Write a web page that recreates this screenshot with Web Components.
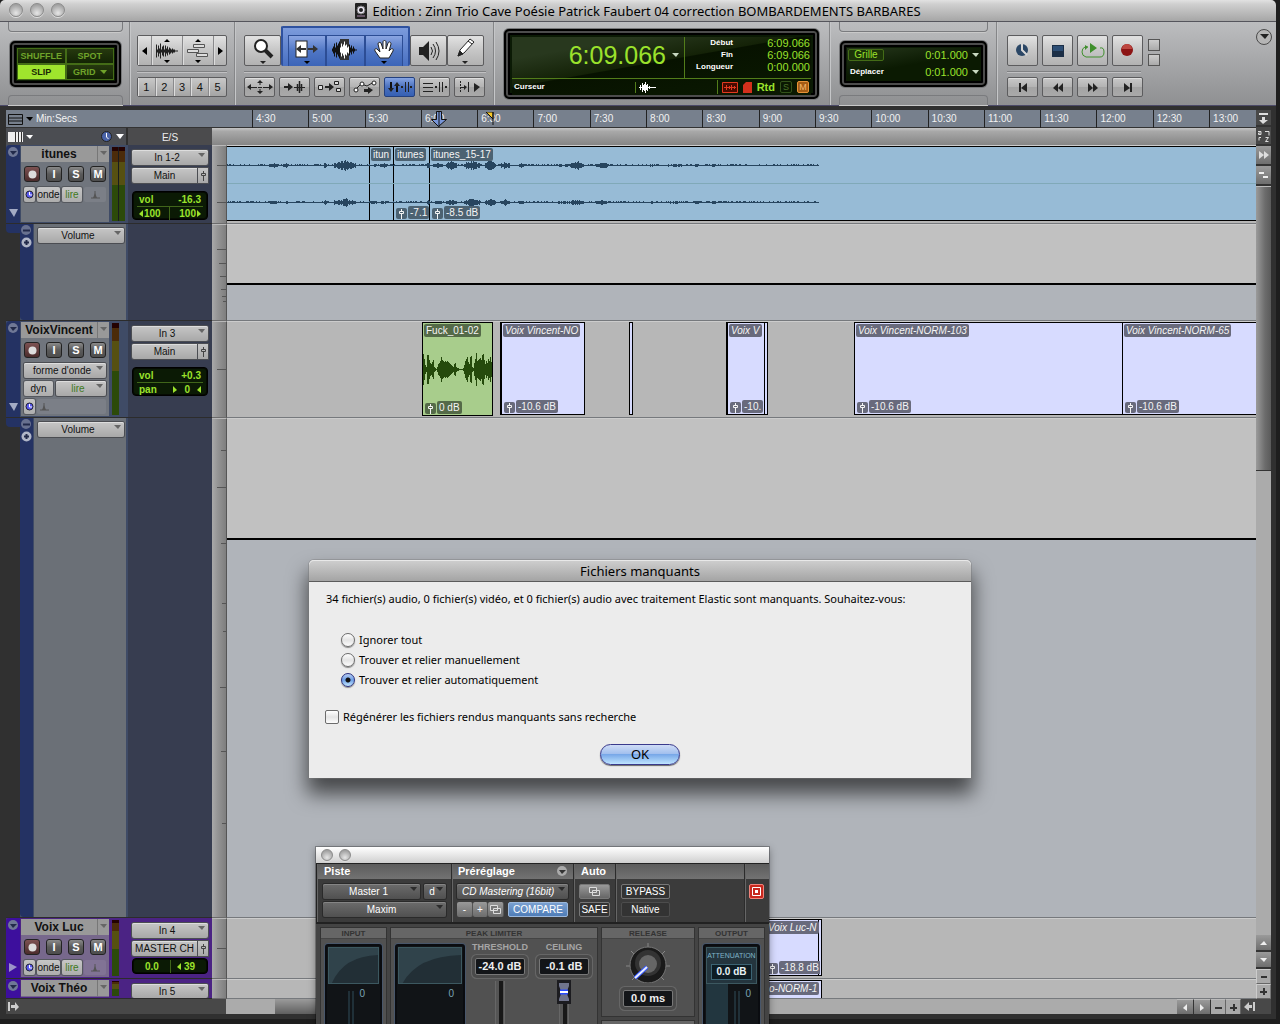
<!DOCTYPE html>
<html lang="fr">
<head>
<meta charset="utf-8">
<title>Edition : Zinn Trio Cave Poésie</title>
<style>
html,body{margin:0;height:100%;overflow:hidden;background:#1e1e1e}
body{font:10px/12px "Liberation Sans",Arial,sans-serif;color:#111}
</style>
</head>
<body>
<pt-app></pt-app>
<script>
const BASE=`*{box-sizing:border-box}:host{display:block}button,select,input{font:inherit;color:inherit;margin:0;padding:0;border:0;background:none}button{display:flex;align-items:center;justify-content:center;white-space:nowrap}svg{display:block;flex:none}`;
function def(tag,css,html){
  customElements.define(tag,class extends HTMLElement{
    connectedCallback(){
      if(this.shadowRoot)return;
      const r=this.attachShadow({mode:'open'});
      r.innerHTML='<style>'+BASE+css+'</style>'+(typeof html==='function'?html(this):html);
    }
  });
}
const svg=(w,h,body)=>`<svg width="${w}" height="${h}" viewBox="0 0 ${w} ${h}" aria-hidden="true">${body}</svg>`;
const wavePts=(a,cx,cy)=>{let s='';a.forEach((v,i)=>{s+=`M${cx+i} ${cy-v}V${cy+v+1}`});return s};
const I={
 left:svg(6,10,'<path d="M5 1V9L0 5Z"/>'),
 right:svg(6,10,'<path d="M1 1V9L6 5Z"/>'),
 wave:svg(24,26,`<path d="M9 4L12 1L15 4ZM9 22L12 25L15 22Z"/><path stroke="#222" d="${wavePts([6,1,5,2,7,1,4,5,1,5,2,4,1,3,2,1,2,1,1,0,0,0],1.5,12.5)}"/>`),
 tracks:svg(22,26,'<path d="M8 4L11 1L14 4ZM8 22L11 25L14 22Z"/><path fill="#ddd" stroke="#555" d="M6.500 6.500h11v3h-11zM.500 11.500h11v3h-11zM9.500 15.500h11v3h-11z"/>'),
 zoom:svg(24,28,'<circle cx="10" cy="9" r="6" fill="#fff" stroke="#222" stroke-width="2"/><path d="M14 13L21 20" stroke="#222" stroke-width="4"/><path d="M9 24h6l-3 3z"/>'),
 trim:svg(26,28,'<rect x="2" y="4" width="11" height="16" fill="#fff" stroke="#222"/><path d="M2 12l5-4v3h5v2h-5v3zM24 12l-5-4v3h-5v2h5v3z" fill="#333"/><path d="M10 24h6l-3 3z"/>'),
 sel:svg(26,28,`<path stroke="#111" d="${wavePts([1,3,6,2,7,4,6,8,9,5,6,8,9,4,7,6,3,5,2,4,1,3,1,0,0],.5,12.5)}"/><rect x="8" y="2" width="9" height="21" fill="#333"/><path stroke="#fff" d="${wavePts([2,6,3,5,8,4,5,2,3],8.5,12.5)}"/>`),
 hand:svg(22,28,'<path d="M7 21l-5-7c-1-2 1-3 2-2l3 3-2-8c0-2 2-2 3-1l2 6V5c0-2 3-2 3 0v7l2-6c1-2 3-1 3 1l-2 7 2-2c1-1 3 0 2 2l-4 7z" fill="#fff" stroke="#222"/><path d="M8 24h6l-3 3z"/>'),
 spk:svg(22,24,'<path d="M1 8h4l6-6v20l-6-6h-4z" fill="#222"/><path d="M13 8q3 4 0 8M15 5q5 7 0 14M18 3q6 9 0 18" fill="none" stroke="#222"/>'),
 pen:svg(22,28,'<path d="M3 19l2-6L15 2l4 3L9 16z" fill="#fff" stroke="#222"/><path d="M3 19l2-5 3 3zM13 4l4 3" stroke="#222"/><path d="M7 24h6l-3 3z"/>'),
 s1:svg(26,16,'<path d="M0 8l4-3v6zM26 8l-4-3v6zM13 1l3 3h-6zM13 15l3-3h-6z"/><path d="M3 8.500h7M16 8.500h7M11 8.500h4M13 3v3M13 10v3" stroke="#222"/>'),
 s2:svg(22,14,'<path d="M0 6h4V3l5 4-5 4V8H0z"/><path d="M10 7.500h11" stroke="#222"/><path d="M15.500 1v12M13.500 4v7M17.500 4v7" stroke="#222" stroke-width="1.500"/>'),
 s3:svg(24,14,'<path d="M7 6h4V3l5 4-5 4V8H7z"/><path d="M.500 5.500h4v4h-4zM16.500 1.500h4v3h-4zM18.500 8.500h4v3h-4z" fill="#ddd" stroke="#222"/>'),
 s4:svg(24,14,'<path d="M2 10L8 4l6 2 7-4" fill="none" stroke="#222"/><circle cx="3" cy="10" r="2" fill="#fff" stroke="#222"/><circle cx="9" cy="4" r="2" fill="#fff" stroke="#222"/><circle cx="21" cy="3" r="2" fill="#fff" stroke="#222"/><path d="M11 9h4V7l5 3-5 4v-2h-4z"/>'),
 s5:svg(24,12,'<path d="M3 1v7M9 4v7" stroke="#111" fill="none" stroke-width="2"/><path d="M0 7h6l-3 4zM6 5h6L9 1zM13 5h2v2h-2zM17 1h1v10h-1zM20 1h1v10h-1zM22 5h2v2h-2z"/>'),
 s6:svg(24,12,'<path d="M0 2.500h10M0 6.500h10M0 10.500h10" stroke="#222"/><path d="M12 5h2v2h-2zM16 1h1v10h-1zM19 1h1v10h-1zM22 5h2v2h-2z"/>'),
 s7:svg(22,12,'<path d="M1.500 0v12" stroke="#222" stroke-dasharray="2 1"/><path d="M9 1h1v10H9zM2 6h3V4l3 2-3 3V7H2zM15 2v9l6-5z"/>'),
 online:svg(13,13,'<circle cx="6" cy="6" r="6" fill="#2b4766"/><path d="M6 0v6l5 5" stroke="#d8d8d8" stroke-width="2" fill="none"/>'),
 stop:svg(12,12,'<rect width="12" height="12" fill="#1c2f47"/><rect x="1" y="1" width="10" height="5" fill="#2d4e75"/>'),
 play:svg(24,16,'<path d="M7 4H4q-3 1-3 5t4 5h14q4 0 4-5t-4-4" fill="none" stroke="#3f8f2c"/><path d="M9 0v10l7-5zM4 2v5l3-3z" fill="#3f8f2c"/>'),
 rec:svg(13,13,'<circle cx="6" cy="6" r="6" fill="#8c1414"/><path d="M1 5a5 5 0 0 1 10 0z" fill="#bd4640"/>'),
 t1:svg(8,9,'<path d="M0 0h2v9H0zM8 0v9L2 5z"/>'),
 t2:svg(10,9,'<path d="M5 0v9L0 5zM10 0v9L5 5z"/>'),
 t3:svg(10,9,'<path d="M0 0v9l5-4zM5 0v9l5-4z"/>'),
 t4:svg(8,9,'<path d="M6 0h2v9H6zM0 0v9l6-4z"/>'),
 down:svg(7,4,'<path fill="currentColor" d="M0 0h7L4 4z"/>'),
 clock:svg(9,9,'<circle cx="4.500" cy="4.500" r="3.500" fill="#5a5af0" stroke="#223"/><path d="M4.500 2v3H7" stroke="#fff" fill="none"/>'),
 metro:svg(9,9,'<path d="M0 8h9M4 1v6" stroke="#555"/><path d="M2 8l2-5 2 5z" fill="#555"/>'),
 fader:svg(7,11,'<path d="M3.500 1v2M3.500 6v5" stroke="currentColor"/><path d="M1.500 3.500h4v2h-4z" fill="none" stroke="currentColor"/>'),
 copy:svg(11,9,'<path d="M.500.500h7v5h-7zM3.500 3.500h7v5h-7z" fill="#777" stroke="#ddd"/>'),
 smallwave:svg(17,11,'<path d="M0 5.500h17M1.500 3v5M3.500 1v9M5.500 2v7M4.500 3v5M6.500 0v11M7.500 3v5M8.500 2v7M10.500 4v3" stroke="#fff"/>')
};

def('round-light',`:host{width:14px;height:14px;border-radius:50%;background:radial-gradient(circle at 50% 75%,#e6e6e6,#a2a2a2 75%);border:1px solid #8b8b8b;box-shadow:0 1px 0 #ddd}`,'');

def('pt-titlebar',`:host{display:flex;height:22px;align-items:center;justify-content:center;position:relative;background:linear-gradient(#e2e2e2,#cfcfcf 20%,#a6a6a6);border-bottom:1px solid #55555c;border-radius:5px 5px 0 0;font:13px/16px "Noto Sans","Open Sans",sans-serif;color:#000;gap:5px}
 .l{position:absolute;left:9px;top:3px;display:flex;gap:7px}`,
 `<div class="l"><round-light></round-light><round-light></round-light><round-light></round-light></div>${svg(12,16,'<rect width="12" height="16" rx="1" fill="#222"/><circle cx="6" cy="7" r="4" fill="#e8e4f0" stroke="#777"/><circle cx="6" cy="7" r="2" fill="#222"/><path d="M2 13h8" stroke="#a8a"/>')}<slot></slot>`);

def('tool-button',`:host{display:block;flex:0 0 auto;width:31px;height:20px}
 button{width:100%;height:100%;border:1px solid #5c5c5e;border-radius:2px;background:linear-gradient(#c8c8c8,#b4b4b4 48%,#a4a4a4 52%,#a9a9a9);box-shadow:inset 0 1px 0 #dedede;color:#222;fill:#222}
 :host([big]) button{background:linear-gradient(#e2e2e2,#c6c6c6 50%,#b2b2b2)}
 :host([on]) button{background:linear-gradient(#86a5e4,#4a70bd 50%,#3560b4);border-color:#24407e;box-shadow:none}`,
 e=>`<button aria-label="${e.getAttribute('label')||e.textContent}">${I[e.getAttribute('icon')]||'<slot></slot>'}</button>`);

def('lcd-box',`:host{display:block;border:2px solid #000;border-radius:5px;background:#0b1a05;box-shadow:0 0 0 1px #77787a,inset 0 0 0 2px #4c4c4c,inset 0 0 0 4px #000;padding:6px;color:#9be22c}
 :host([mini]){border-width:1px;border-radius:4px;box-shadow:inset 0 0 0 1px #050a02;padding:1px 4px}`,'<slot></slot>');

def('pt-toolbar',`:host{display:flex;height:84px;background:linear-gradient(#bcbdbf,#a5a6a8 50%,#8f9092);border-bottom:1px solid #4c4a68;position:relative}
 section{border-right:1px solid #858688;box-shadow:1px 0 0 #c5c6c8;display:flex;flex-direction:column;flex:none}
 .frame{justify-content:space-between;padding:0 6px 0 8px}
 .cap{height:10px;border:1px solid #7a7b7e;border-top:0;border-radius:0 0 4px 4px;box-shadow:0 1px 0 #c9c9c9}
 .cap.b{border:1px solid #7a7b7e;border-bottom:0;border-radius:4px 4px 0 0}
 .row{display:flex}
 .pad{padding:13px 7px 0 7px}
 .hr{height:2px;background:#7f8082;border-bottom:1px solid #c0c0c2;margin:5px 0 4px}
 .seg{border:1px solid #5c5c5e;border-radius:2px;background:linear-gradient(#e2e2e2,#c6c6c6 50%,#b2b2b2)}
 .seg button{flex:1 1 0;border-left:1px solid #8a8a8c;box-shadow:inset 1px 0 0 #ddd}
 .seg button:first-child{border-left:0}
 .modes{display:grid;grid-template-columns:1fr 1fr;grid-template-rows:16px 16px;font:bold 9px/12px "Liberation Sans",Arial,sans-serif;color:#6fa32a;gap:0;height:32px}
 .modes button{border:1px solid #446c17;background:linear-gradient(#26390f,#132404);gap:4px}
 .modes button.on{background:#9fe52d;color:#1a2a05}
 .blue{display:flex;background:linear-gradient(#7c9bdc,#4870c2);border:2px solid #2e519f;border-bottom:0;border-radius:2px;padding:7px 5px 0;margin-top:-9px;width:129px;height:40px}
 .blue button{flex:1;border:1px solid #2c4d95;border-bottom:0;background:linear-gradient(#8aa5e2,#4f76c5 50%,#3c65b8)}
 .nums{height:20px;background:linear-gradient(#c8c8c8,#a4a4a4);font-size:11px}
 .main{display:grid;grid-template-columns:173px 1fr;grid-template-rows:42px 16px;height:58px;width:100%;background:linear-gradient(170deg,#28381e 0 20%,#142207 45%,#071200 46%,#0b1a02)}
 .big{display:flex;align-items:center;justify-content:flex-end;gap:6px;font-size:25px;line-height:28px;padding:0 5px 6px 0;border-right:1px solid #527d1a;border-bottom:1px solid #527d1a}
 .rng{display:grid;grid-template-columns:48px 1fr;align-content:start;text-align:right;font-size:11px;line-height:12px;padding-right:1px;border-bottom:1px solid #527d1a}
 .lab{font:bold 8px/12px "Liberation Sans",Arial,sans-serif;color:#fff}
 .bot{grid-column:1/3;display:flex;align-items:center;padding:0 2px}
 .g{display:grid;grid-template-columns:36px 1fr 7px;align-items:center;gap:0 4px;grid-template-rows:15px 18px;text-align:right;font-size:11px;height:33px;padding:0 1px;background:linear-gradient(170deg,#26371c,#0b1a02 50%)}
 .g .gr{border:1px solid #446c17;background:#1c3409;border-radius:2px;font-size:10px;line-height:10px;color:#9be22c;text-align:center}
 .sq{width:12px;height:12px;border:1px solid #555;background:linear-gradient(#ccc,#aaa)}
 .tri{color:#c8d8c0}
 .menu{position:absolute;right:4px;top:7px;width:16px;height:16px;border:1px solid #4a4a4a;border-radius:50%;background:#b5b5b5;color:#333}
 .s,.m{width:12px;height:12px;border:1px solid #33521a;border-radius:2px;font:9px/10px "Liberation Sans",Arial,sans-serif;text-align:center;color:#4a7228}
 .m{border-color:#e69238;background:#a35c14;color:#f3b86a}`,
 `<section class="frame" style="width:130px"><div class="cap"></div>
  <lcd-box style="margin:0 2px;padding:5px;height:46px"><div class="modes"><button>SHUFFLE</button><button>SPOT</button><button class="on">SLIP</button><button>GRID ${I.down}</button></div></lcd-box><div class="cap b"></div></section>
 <section class="pad" style="width:105px"><div class="row seg" style="width:90px;height:31px"><button style="flex:0 0 13px" aria-label="Zoom arrière">${I.left}</button><button aria-label="Zoom audio">${I.wave}</button><button aria-label="Zoom MIDI">${I.tracks}</button><button style="flex:0 0 13px" aria-label="Zoom avant">${I.right}</button></div><div class="hr" style="width:90px"></div>
  <div class="row seg nums" style="width:90px"><button>1</button><button>2</button><button>3</button><button>4</button><button>5</button></div></section>
 <section class="pad" style="width:259px;padding-left:9px"><div class="row" style="height:31px"><tool-button big icon="zoom" label="Loupe" style="width:37px;height:31px"></tool-button><div class="blue"><button aria-label="Trim">${I.trim}</button><button aria-label="Sélecteur">${I.sel}</button><button aria-label="Main">${I.hand}</button></div><tool-button big icon="spk" label="Scrubber" style="width:37px;height:31px"></tool-button><tool-button big icon="pen" label="Crayon" style="width:37px;height:31px"></tool-button></div><div class="hr"></div>
  <div class="row" style="gap:4px"><tool-button icon="s1" label="Zoom toggle"></tool-button><tool-button icon="s2" label="Tab to transient"></tool-button><tool-button icon="s3" label="Mirrored"></tool-button><tool-button icon="s4" label="Automation"></tool-button><tool-button on icon="s5" label="Link"></tool-button><tool-button icon="s6" label="Link track"></tool-button><tool-button icon="s7" label="Insertion"></tool-button></div></section>
 <section style="width:336px;padding:7px 10px 0 10px"><lcd-box style="height:70px"><div class="main"><div class="big">6:09.066<span class="tri">${I.down}</span></div><div class="rng"><span class="lab">Début</span><span>6:09.066</span><span class="lab">Fin</span><span>6:09.066</span><span class="lab">Longueur</span><span>0:00.000</span></div>
  <div class="bot"><span class="lab" style="flex:0 0 121px">Curseur</span><span style="border-left:1px solid #527d1a;padding-left:3px;flex:1">${I.smallwave}</span><span style="border-left:1px solid #527d1a;height:14px;display:flex;align-items:center;gap:5px;padding-left:4px">${svg(16,11,'<path d="M.500.500h15v10H.500z" fill="#4a0a00" stroke="#e33a20"/><path d="M2 5.500h12M4.500 3v5M7.500 4v3M9.500 3v5M12.500 4v3" stroke="#e33a20"/>')}${svg(9,11,'<path d="M3 0h6v11H0V3z" fill="#d2301c"/>')}<b style="font-size:11px">Rtd</b><span class="s">S</span><span class="m">M</span></span></div></div></lcd-box></section>
 <section class="frame" style="width:167px;padding:0 8px 0 9px"><div class="cap"></div><lcd-box style="margin:0 1px;padding:5px;height:46px"><div class="g"><span class="gr">Grille</span><span>0:01.000</span><span class="tri">${I.down}</span><span class="lab" style="text-align:left;padding-left:2px">Déplacer</span><span>0:01.000</span><span class="tri">${I.down}</span></div></lcd-box><div class="cap b"></div></section>
 <div class="pad" style="padding-left:10px"><div class="row" style="gap:4px"><tool-button big icon="online" label="En ligne" style="height:31px"></tool-button><tool-button big icon="stop" label="Stop" style="height:31px"></tool-button><tool-button big icon="play" label="Lecture" style="height:31px"></tool-button><tool-button big icon="rec" label="Enregistrer" style="height:31px"></tool-button><div style="display:flex;flex-direction:column;gap:3px;padding:4px 0 0 1px"><span class="sq"></span><span class="sq"></span></div></div><div class="hr" style="width:134px"></div>
  <div class="row" style="gap:4px"><tool-button icon="t1" label="Début"></tool-button><tool-button icon="t2" label="Retour"></tool-button><tool-button icon="t3" label="Avance"></tool-button><tool-button icon="t4" label="Fin"></tool-button></div></div>
 <button class="menu" aria-label="Menu">${svg(9,6,'<path d="M0 0h9L5 5z" fill="#222"/>')}</button>`);

def('time-ruler',`:host{display:flex;height:18px;background:#77808d;border-bottom:1px solid #333;color:#f2f2f2;position:relative;line-height:18px}
 .h{flex:0 0 246px;display:flex;align-items:center;gap:3px;padding:1px 0 0 2px}
 .t{flex:1;display:grid;grid-template-columns:repeat(17,30fr) 25fr;min-width:0}
 .t span{border-left:1px solid #222;padding:0 0 0 3px;white-space:nowrap}
 .cur{position:absolute;left:424px;top:1px}.flag{position:absolute;left:480px;top:2px}`,
 ()=>{let s='';for(let m=270;m<=780;m+=30)s+=`<span>${Math.floor(m/60)}:${m%60?'30':'00'}</span>`;
 return `<div class="h">${svg(15,11,'<path d="M.500.500h14v10H.500zM0 4h15M0 7h15" fill="none" stroke="#111"/>')}${svg(7,4,'<path d="M0 0h7L4 4z"/>')}<span>Min:Secs</span></div><div class="t">${s}</div><span class="cur">${svg(18,16,'<path d="M6.500.500h5v8h5l-8 7-7-7h5z" fill="#7795d8" stroke="#111"/><path d="M9 0v16" stroke="#111"/>')}</span><span class="flag">${svg(8,14,'<path d="M0 0h7v7z" fill="#f6c928" stroke="#111"/><path d="M7 0v13" stroke="#111"/>')}</span>`});

def('pt-select',`:host{display:flex;height:15px;position:relative;color:#111}
 select{appearance:none;flex:1;width:100%;min-width:0;height:100%;border-radius:2px;background:linear-gradient(#c6c6c6,#a8a8a8);box-shadow:0 0 0 1px #4b4d52,inset 0 1px 0 #ddd;text-align:center;text-align-last:center;padding:0 6px 0 0;line-height:13px}
 i{position:absolute;right:3px;top:3px;color:#666}
 :host([dark]){color:#fff}:host([dark]) select{background:linear-gradient(#6c6c6c,#505050);box-shadow:0 0 0 1px #2a2a2a,inset 0 1px 0 #858585}
 :host([dark]) i{color:#2c2c2c}:host([green]) select{color:#3f7a22}:host([italic]) select{font-style:italic;text-align-last:left;padding-left:5px}
 :host([fader]) select{border-radius:2px 0 0 2px;padding:0}:host([fader]) i{display:none}
 .f{display:none}:host([fader]) .f{display:flex;flex:0 0 10px;width:10px;color:#444;background:linear-gradient(#c6c6c6,#a8a8a8);box-shadow:0 0 0 1px #4b4d52;margin-left:1px}`,
 e=>`<select aria-label="${e.getAttribute('value')}"><option>${e.getAttribute('value')}</option></select><i>${I.down}</i><button class="f" aria-label="Fader">${I.fader}</button>`);

def('level-meter',`:host{display:flex;width:13px;gap:1px;background:#1a1c20;padding:0;border-radius:1px}
 span{flex:1;background:linear-gradient(#240202 0 5%,#4b2b0a 5% 20%,#565012 20% 52%,#2c4a0a 52%)}`,
 e=>e.hasAttribute('mono')?'<span></span>':'<span></span><span></span>');

const small=(ch,l)=>`<button class="sb" aria-label="${l}">${ch}</button>`;
def('track-head',`:host{display:flex;flex:0 0 206px;background:var(--bg,#3f4b66);overflow:hidden}
 .bar{flex:0 0 14px;background:var(--bar,#243263);border-radius:4px 0 0 0;display:flex;flex-direction:column;justify-content:space-between;align-items:center;padding:2px 0 6px;color:#a8b0cc}
 .p{flex:0 0 88px;background:var(--panel,#70757d);margin:1px 0 1px 1px}
 .n{display:flex;height:16px;background:#999;color:#111;font:bold 12px/16px "Liberation Sans",Arial,sans-serif}
 .n button{flex:1;min-width:0}.n .d{flex:0 0 12px;border-left:1px solid #777;color:#666;align-items:flex-start;padding-top:5px}
 .r{display:flex;padding:4px 3px 0;gap:6px;height:24px}
 .sb{width:16px;height:16px;border:1px solid #222;border-radius:3px;background:linear-gradient(#8a8a8a,#5a5a5a 50%,#4d4d4d);color:#fff;font:bold 11px/13px "Liberation Sans",Arial,sans-serif}
 .sb.rec{background:linear-gradient(#7d5252,#4b2c2c)}
 .r2{display:flex;gap:2px;padding:1px 3px 2px;height:18px}
 .r2 button,.r2 pt-select{height:15px;border-radius:2px}
 .r2 .k{background:linear-gradient(#c6c6c6,#adadad);box-shadow:0 0 0 1px #55585e;color:#111}
 .r2 .lire{color:#3f7a22}.r2 .dim{background:#ffffff14}
 .m{margin:2px 0 2px 3px;flex:none;height:auto}
 .io{flex:0 0 84px;background:var(--io,#373d50);padding:5px 4px 0;display:flex;flex-direction:column;gap:3px;margin-left:auto}
 .io lcd-box{margin-top:5px;font:bold 10px/13px "Liberation Sans",Arial,sans-serif}
 .q{display:flex;justify-content:space-between;align-items:center;height:13px;padding:0 2px}
 .q+.q{border-top:1px solid #40651a}`,
 e=>{const a=k=>e.getAttribute(k);const tall=e.hasAttribute('tall'),mini=e.hasAttribute('mini'),cut=e.hasAttribute('cut');
 const la='<svg width="4" height="7"><path d="M4 0v7L0 4z" fill="#9be22c"/></svg>',ra='<svg width="4" height="7"><path d="M0 0v7l4-3z" fill="#9be22c"/></svg>';
 return `<div class="bar">${svg(11,11,'<circle cx="5" cy="5" r="5" fill="#6f7896"/><path d="M2 4h7L5 8z" fill="#222a4a"/>')}${cut?'':mini?svg(8,9,'<path d="M0 0v9l8-5z" fill="#9b93c8"/>'):svg(9,8,'<path d="M0 0h9L5 8z" fill="#a3abc4"/>')}</div>
 <div class="p"><div class="n"><button>${a('name')}</button><button class="d" aria-label="Menu piste">${I.down}</button></div>
 ${cut?'':`<div class="r"><button class="sb rec" aria-label="Armer">${svg(9,9,'<circle cx="4.500" cy="4.500" r="4" fill="#ddd"/>')}</button>${small('I','Entrée')}${small('S','Solo')}${small('M','Muet')}</div>
 ${tall?`<div class="r2"><pt-select value="forme d'onde" style="flex:1"></pt-select></div><div class="r2"><button class="k" style="width:29px">dyn</button><pt-select green value="lire" style="flex:1;margin-left:1px"></pt-select></div><div class="r2"><button class="k" style="width:11px" aria-label="Base temps">${I.clock}</button><button class="dim" style="flex:1;justify-content:flex-start;padding-left:3px" aria-label="Élastique">${I.metro}</button></div>`
 :`<div class="r2"><button class="k" style="width:11px" aria-label="Base temps">${I.clock}</button><button class="k" style="width:23px">onde</button><button class="k lire" style="width:20px">lire</button><button class="dim" style="flex:1" aria-label="Élastique">${I.metro}</button></div>`}`}</div>
 <level-meter class="m" ${tall||mini?'mono style="width:7px"':''}></level-meter>
 <div class="io"><pt-select value="${a('in')}"></pt-select>${cut?'':`<pt-select fader value="${a('out')}"></pt-select>
 ${mini?`<lcd-box mini style="height:16px;margin-top:-1px;padding:0 4px"><div class="q" style="height:14px;padding:0 8px"><span>${a('vol')}</span><span style="border-left:1px solid #40651a;padding-left:6px;display:flex;align-items:center;gap:3px">${la}${a('pan')}</span></div></lcd-box>`
 :`<lcd-box mini style="height:29px"><div class="q"><span>vol</span><span>${a('vol')}</span></div><div class="q">${tall?`<span>pan</span><span style="display:flex;gap:7px;align-items:center">${ra}<span>0</span>${la}</span>`:`<span style="display:flex;align-items:center;gap:1px">${la}100</span><span style="border-left:1px solid #40651a;padding-left:9px;display:flex;align-items:center;gap:1px">100${ra}</span>`}</div></lcd-box>`}`}</div>`});

def('auto-head',`:host{display:flex;flex:0 0 206px;background:#3f4b66}
 .a{flex:0 0 14px;background:#303030}.a div{height:9px;background:#243263;border-radius:0 0 0 4px}
 .b{flex:0 0 13px;background:#243263;border-radius:0 0 0 4px;display:flex;flex-direction:column;gap:1px;align-items:center;padding-top:1px}
 .c{flex:0 0 92px;margin-left:1px;background:#6b7077;padding:4px 2px 0 4px}
 .d{flex:0 0 84px;margin-left:auto;background:#373d50}`,
 `<div class="a"><div></div></div><div class="b">${svg(11,11,'<circle cx="5" cy="5" r="5" fill="#68718f"/><path d="M2 5.500h7" stroke="#222a4a" stroke-width="2"/>')}${svg(11,11,'<circle cx="5.500" cy="5.500" r="5" fill="#b0b6c8"/><path d="M3 5.500h5M5.500 3v5" stroke="#222a4a" stroke-width="2"/>')}</div><div class="c"><pt-select value="Volume"></pt-select></div><div class="d"></div>`);

/* One row of the edit list: controls, amplitude margin and lane. */
def('edit-row',`:host{display:flex;flex:none;min-height:0;overflow:hidden}
 .h{display:flex;flex:0 0 206px;border-bottom:1px solid #2c2c2c}
 .g{flex:0 0 15px;background:linear-gradient(90deg,#a9a9a9,#959595 40%,#7e7e7e);border-bottom:1px solid #6c6c6c;border-top:1px solid #b9b9b9;border-right:1px solid #555;overflow:hidden}
 .l{flex:1;position:relative;min-width:0;overflow:hidden;background:#b7b7b7;border-top:1px solid #ccc;border-bottom:1px solid #76797d}
 .up{background:#c1c1c1;border-bottom:2px solid #000}
 :host([auto]) .l{background:#b0b4ba}`,
 e=>{const t=(e.getAttribute('ticks')||'').split(',').filter(Boolean).map(x=>{const[y,w]=x.split(':');return `M${14-w} ${y}.500H14`}).join('');
 return `<div class="h"><slot name="head"></slot></div><div class="g">${svg(14,480,`<path d="${t}" stroke="#555"/>`)}</div><div class="l">${e.getAttribute('auto')?`<div class="up" style="height:${e.getAttribute('auto')}px"></div>`:''}<slot></slot></div>`});

def('audio-clip',`:host{position:absolute;top:0;bottom:2px;border:1px solid #000;background:var(--c,#d7dbff);overflow:hidden;display:flex;flex-direction:column;justify-content:space-between;padding:1px;line-height:13px;color:#f4f4f4}
 .n,.b span{background:var(--t,#686a7c);border-radius:2px;padding:0 2px;white-space:nowrap;position:relative;z-index:1}
 .n{align-self:flex-start;height:13px}
 :host([it]) .n{font-style:italic}
 .b{display:flex;gap:1px;align-items:flex-end;padding-left:1px}.b span{flex:none;height:13px}.b span.f{height:11px;width:11px}`,
 e=>`${e.getAttribute('name')?`<div class="n">${e.getAttribute('name')}</div>`:''}<slot></slot>${e.getAttribute('gain')?`<div class="b"><span class="f">${I.fader}</span><span>${e.getAttribute('gain')}</span></div>`:''}`);

/* Waveform built from [start, end, amplitude] bursts. */
let seed=7;const rnd=()=>(seed=(seed*16807)%2147483647)/2147483647;
function bursts(x0,x1,cy,list){let d='';for(let x=x0;x<x1;x++){if(rnd()<.35)d+=`M${x}.500 ${cy-1}V${cy+1}`;for(const[s,e,m]of list)if(x>=s&&x<=e){const k=1-Math.abs((x-(s+e)/2)/((e-s)/2+1));const a=Math.round(m*(k*.6+.4)*(.4+.6*rnd()));d+=`M${x}.500 ${cy-a}V${cy+a+1}`}}return d}
const BL=[[42,50,2],[56,60,2],[97,99,3],[107,128,5],[143,150,1],[153,160,2],[200,202,3],[206,215,2],[219,229,4],[237,252,5],[258,268,5],[274,282,4],[292,296,2],[330,348,1],[344,356,4],[369,380,3],[421,427,1],[440,456,1],[466,472,1],[484,488,1]];
def('stereo-wave',`:host{position:absolute;inset:0;pointer-events:none}`,()=>`<svg width="1030" height="76"><path d="M0 37.500h1030" stroke="#80a9b8"/><path stroke="#27455f" d="M0 19.500H592M0 56.500H592${bursts(0,592,19,BL)}${bursts(0,592,56,BL.map(([a,b,c])=>[a,b,Math.max(1,c-1)]))}"/></svg>`);
const GR=[15,10,4,2,14,14,9,6,5,7,9,2,1,0,2,5,6,8,12,9,8,7,8,7,8,7,6,5,4,3,2,5,6,2,1,1,0,0,0,0,1,4,8,10,12,7,5,12,13,2,1,6,10,16,8,9,10,11,9,14,15,9,5,8,6,10,8,12,7];
def('mono-wave',`:host{position:absolute;inset:0}`,()=>`<svg width="70" height="92"><path stroke="#254a0c" d="M0 46.500H70${wavePts(GR,.5,46)}"/></svg>`);

def('scroll-col',`:host{display:flex;flex-direction:column;flex:0 0 15px;background:#ababab}
 .btn{height:17px;background:linear-gradient(#9a9a9a,#6e6e6e);border-bottom:2px solid #333;fill:#eee;width:100%}
 .btn.k{background:#484848}
 .btn.z{height:15px;background:#a9a9a9;border:1px solid #ccc;border-right-color:#777;border-bottom-color:#666}
 .th{height:285px;background:linear-gradient(90deg,#9b9b9b,#6c6c6c 60%,#5a5a5a);border-top:1px solid #bbb;border-bottom:1px solid #333}`,
 `<button class="btn k" aria-label="Défilement">${svg(11,12,'<path d="M1 1h9v2H1zM4 5h3v3h3l-5 4-4-4h3z" fill="#ddd"/>')}</button><button class="btn k" style="height:19px" aria-label="Tri">${svg(13,14,'<path d="M1 2.500h3v3H1.500v-1.500h2M8.500 8.500h3l-3 4h3M8 2.500h4v4M4 8.500H2v3" fill="none" stroke="#ddd"/>')}</button>
 <button class="btn" style="height:20px" aria-label="Zoom forme">${svg(12,12,'<path d="M1 2l5 4-5 4zM6 2l5 4-5 4z" fill="#ddd"/>')}</button><button class="btn" style="height:20px" aria-label="Zoom piste">${svg(11,10,'<path d="M1 3h5M5 7h5" stroke="#eee" stroke-width="2"/>')}</button>
 <div class="th"></div><div style="flex:1"></div>
 <button class="btn" aria-label="Haut">${svg(7,4,'<path d="M0 4h7L4 0z"/>')}</button><button class="btn" aria-label="Bas">${svg(7,4,'<path d="M0 0h7L4 4z"/>')}</button>
 <button class="btn z" aria-label="Moins">${svg(7,7,'<path d="M1 3h6v2H1z" fill="#333"/>')}</button><button class="btn z" aria-label="Plus">${svg(7,7,'<path d="M0 3h7v2H0zM3 0h2v7H3z" fill="#333"/>')}</button>`);

def('scroll-row',`:host{display:flex;height:15px;background:#ababab}
 button{width:17px;height:15px;background:linear-gradient(#9a9a9a,#6e6e6e);border-right:1px solid #333;border-top:1px solid #bbb;fill:#eee}
 .z{width:15px;background:#a9a9a9;fill:#333;border-right-color:#666}
 .s{flex:0 0 220px;background:#484848;padding:3px 2px}.th{flex:0 0 320px;margin-left:49px;background:linear-gradient(#9b9b9b,#5f5f5f)}`,
 `<div class="s">${svg(11,10,'<path d="M0 0h2v9H0zM3 3h4V0l4 5-4 4V6H3z" fill="#ccc"/>')}</div><div class="th"></div><div style="flex:1"></div><button aria-label="Gauche">${svg(4,7,'<path d="M4 0v7L0 4z"/>')}</button><button aria-label="Droite">${svg(4,7,'<path d="M0 0v7l4-3z"/>')}</button><button class="z" aria-label="Moins">${svg(7,7,'<path d="M0 3h7v2H0z"/>')}</button><button class="z" aria-label="Plus">${svg(7,7,'<path d="M0 3h7v2H0zM3 0h2v7H3z"/>')}</button><div style="flex:0 0 30px;background:#484848;padding:3px">${svg(11,10,'<path d="M9 0h2v9H9zM8 3H5V0L0 5l5 4V6h3z" fill="#ccc"/>')}</div>`);

def('missing-dialog',`:host{position:absolute;left:50%;top:560px;width:662px;transform:translateX(-50%);background:#ececec;border-radius:5px 5px 0 0;box-shadow:0 0 0 1px #7776,0 14px 20px 2px #0009;font:11px/20px "Noto Sans","Open Sans",sans-serif;color:#000;z-index:3}
 h1{margin:0;height:22px;font:13px/22px "Noto Sans","Open Sans",sans-serif;text-align:center;background:linear-gradient(#cfcfcf,#a4a4a4);border-bottom:1px solid #5b5b5b;border-radius:5px 5px 0 0;box-shadow:inset 0 1px 0 #e8e8e8}
 p{margin:0;padding:7px 17px 21px;white-space:nowrap}
 label{display:flex;align-items:center;gap:4px;height:20px}
 .o{padding-left:32px}.c{padding:17px 0 0 16px}
 input{appearance:none;width:14px;height:14px;border:1px solid #6c6c6c;background:linear-gradient(#fff,#e4e4e4 50%,#fdfdfd)}
 input[type=radio]{border-radius:50%;box-shadow:0 1px 1px #888}
 input[type=radio]:checked{border-color:#2a2f7c;background:radial-gradient(circle,#111 0 2px,#0000 3px),linear-gradient(#b8cdf2,#6d9fe6 50%,#c4e8ff)}
 input[type=checkbox]{border-radius:2px}
 .ok{width:80px;height:21px;margin:17px auto 13px;padding-bottom:2px;border:1px solid #3a3a8c;border-radius:11px;background:linear-gradient(#cfdcf6,#a3c0ee 45%,#78a8e8 50%,#bfe4ff);box-shadow:0 1px 1px #666;font:13px/16px "Noto Sans","Open Sans",sans-serif}`,
 `<h1><slot name="title"></slot></h1><p><slot></slot></p><div class="o"><label><input type="radio" name="m">Ignorer tout</label><label><input type="radio" name="m">Trouver et relier manuellement</label><label><input type="radio" name="m" checked>Trouver et relier automatiquement</label></div><div class="c"><label><input type="checkbox">Régénérer les fichiers rendus manquants sans recherche</label></div><button class="ok">OK</button>`);

def('level-screen',`:host{display:block;height:110px;background:#111417;border:2px solid #0a0c10;box-shadow:0 0 0 1px #48566a;border-radius:3px;padding:1px;color:#7aa3b4;margin-top:2px}
 .g{height:37px;border:1px solid #3c5860;background:#30434b}
 .b{display:flex;justify-content:flex-end;align-items:flex-start;gap:5px;padding:3px 14px 0 0;line-height:14px}
 .b i{width:6px;height:80px;border:solid #203038;border-width:0 2px;margin-top:4px}
 :host([out]) .g{text-align:center;background:#24353e}
 .a{font:7px/16px "Liberation Sans",Arial,sans-serif;color:#7fb4c8}
 .v{margin:0 4px;background:#0d1c24;border:1px solid #3c6474;color:#e8f2f5;font:bold 10px/14px "Liberation Sans",Arial,sans-serif;white-space:nowrap}`,
 e=>e.hasAttribute('out')?`<div class="g"><div class="a">ATTENUATION</div><div class="v">0.0 dB</div></div><div class="b" style="padding-right:6px;border-left:22px solid #22363f"><i></i><span>0</span></div>`:`<div class="g"><svg width="100%" height="35" viewBox="0 0 50 35" preserveAspectRatio="none"><path d="M3 35Q15 8 50 7V35z" fill="#222f36"/></svg></div><div class="b" style="padding-right:${e.hasAttribute('wide')?8:14}px"><i style="${e.hasAttribute('wide')?'display:none':''}"></i><span>0</span></div>`);

def('plugin-window',`:host{position:absolute;left:316px;top:847px;width:453px;background:#4a4a4a;color:#fff;box-shadow:0 0 0 1px #0004,0 2px 8px #0006;z-index:2}
 .tb{height:16px;background:linear-gradient(#fff,#cfcfcf);display:flex;gap:6px;padding:2px 5px}
 .tb round-light{width:12px;height:12px}
 .hd{display:flex;border:solid #222;border-width:1px 1px 2px}
 .c{border-left:1px solid #2c2c2c;box-shadow:inset 1px 0 0 #666;background:linear-gradient(#5c5c5c,#727272) 0 0/100% 15px no-repeat #3b3b3b;height:58px;flex:none}
 .c:first-child{border:0}
 .t{height:15px;font:bold 11px/15px "Liberation Sans",Arial,sans-serif;padding-left:7px;display:flex;justify-content:space-between;align-items:center}
 .r{display:flex;gap:4px;padding:5px 5px 0 6px;height:20px}.r+.r{padding-top:3px;height:18px}
 button{height:15px;border:1px solid #777;border-radius:2px;background:#333}
 .seg{display:flex;width:47px}.seg button{flex:1;border:0;border-right:1px solid #555;background:linear-gradient(#999,#6c6c6c)}
 .bd{display:flex;gap:3px;padding:3px 4px;height:220px;background:#444}
 .p{background:#515151;border:1px solid #333;box-shadow:inset 0 1px 0 #777;flex:none}
 h3{margin:0;height:11px;font:bold 8px/11px "Liberation Sans",Arial,sans-serif;color:#333;background:#666;text-align:center;border-bottom:1px solid #444}
 .in{padding:3px 4px;display:flex;gap:6px}
 .k{display:flex;flex-direction:column;align-items:center;width:58px;color:#a5a5a5;font:bold 9px/10px "Liberation Sans",Arial,sans-serif;gap:6px}
 .v{border:1px solid #777;border-radius:2px;box-shadow:0 0 0 3px #4a4a4a,0 0 0 4px #666;background:#131518;color:#eee;font:bold 11px/15px "Liberation Sans",Arial,sans-serif;height:17px;width:50px;text-align:center;white-space:nowrap;flex:none}
 .sl{width:10px;height:90px;background:linear-gradient(90deg,#555 0 3px,#181818 3px 7px,#555 7px);border:solid #666;border-width:0 1px;flex:none}`,
 `<div class="tb"><round-light></round-light><round-light></round-light></div>
 <div class="hd"><div class="c" style="width:134px"><div class="t">Piste</div><div class="r"><pt-select dark value="Master 1" style="flex:1"></pt-select><pt-select dark value="d" style="width:22px"></pt-select></div><div class="r"><pt-select dark value="Maxim" style="flex:1"></pt-select></div></div>
 <div class="c" style="width:122px"><div class="t" style="padding-left:6px">Préréglage<span style="padding-right:5px">${svg(11,11,'<circle cx="5" cy="5" r="5" fill="#aaa"/><path d="M2 4h7L5 8z" fill="#333"/>')}</span></div><div class="r" style="padding-left:5px"><pt-select dark italic value="CD Mastering (16bit)" style="flex:1"></pt-select></div><div class="r" style="padding-left:5px"><div class="seg"><button>-</button><button>+</button><button aria-label="Copier">${I.copy}</button></div><button style="flex:1;background:linear-gradient(#7aa0d0,#4f7db8);border-color:#9bb8dc">COMPARE</button></div></div>
 <div class="c" style="width:42px"><div class="t">Auto</div><div class="r" style="padding-left:5px"><button style="flex:1;background:linear-gradient(#999,#666)" aria-label="Automation">${I.copy}</button></div><div class="r" style="padding-left:5px"><button style="flex:1">SAFE</button></div></div>
 <div class="c" style="width:129px"><div class="t"></div><div class="r" style="padding-left:5px"><button style="width:49px">BYPASS</button></div><div class="r" style="padding-left:5px"><button style="width:49px;border-color:#4c4c4c">Native</button></div></div>
 <div class="c" style="flex:1"><div class="t"></div><div class="r" style="padding-left:4px"><button style="width:15px;background:#c8281e;border-color:#f0837b" aria-label="Cible">${svg(9,9,'<path d="M.500.500h8v8h-8z" fill="none" stroke="#fff"/><path d="M3 3h3v3H3z" fill="#fff"/>')}</button></div></div></div>
 <div class="bd"><div class="p" style="width:67px"><h3>INPUT</h3><div class="in"><level-screen style="flex:1"></level-screen></div></div>
 <div class="p" style="width:208px"><h3>PEAK LIMITER</h3><div class="in"><level-screen wide style="flex:0 0 70px"></level-screen><div class="k"><span>THRESHOLD</span><span class="v">-24.0 dB</span><div class="sl"></div></div><div class="k"><span>CEILING</span><span class="v">-0.1 dB</span><div class="sl"></div>
 </div></div></div>
 <div style="display:flex;flex-direction:column;gap:3px;width:94px;flex:none"><div class="p" style="height:90px"><h3>RELEASE</h3><div style="display:flex;flex-direction:column;align-items:center;padding-top:4px;gap:7px">${svg(44,40,'<g stroke="#888"><path d="M22 0v4M5 8l3 3M39 8l-3 3M0 23h4M44 23h-4M6 37l3-3M38 37l-3-3"/></g><circle cx="22" cy="22" r="18" fill="#1a1a1a" stroke="#777"/><circle cx="22" cy="20" r="13" fill="#333"/><circle cx="22" cy="21" r="9" fill="#666"/><path d="M21 24L9 35" stroke="#3456ff" stroke-width="4"/><path d="M21 24L9 35" stroke="#e8eeff" stroke-width="2"/>')}<span class="v">0.0 ms</span></div></div><div class="p" style="flex:1"><h3>DITHER</h3></div></div>
 <div class="p" style="flex:1;min-width:0"><h3>OUTPUT</h3><div class="in"><level-screen out style="flex:1;min-width:0"></level-screen></div></div></div>
 <div style="position:absolute;left:241px;top:133px">${svg(14,24,'<rect width="14" height="24" fill="#1c1c20"/><path d="M2 3h10v3l-2 5v3l2 5v2H2v-2l2-5v-3L2 6z" fill="#70748c"/><path d="M3 12h8" stroke="#2a4cff" stroke-width="5"/><path d="M3 12h8" stroke="#fff" stroke-width="2"/>')}</div>`);

def('pt-app',`:host{display:flex;flex-direction:column;height:100vh;position:relative;overflow:hidden;background:#1e1e1e}
 .win{display:flex;flex-direction:column;flex:1;margin:0 4px 5px 0;min-height:0}
 .ed{flex:1;min-height:0;display:flex;background:#303030;padding:4px 5px 5px 6px;flex-direction:column}
 .up{flex:1;display:flex;min-height:0}.m{flex:1;display:flex;flex-direction:column;min-width:0;min-height:0}
 .hd{display:flex;height:17px;flex:none;color:#eee}
 .h1{flex:0 0 120px;background:#4b4d52;display:flex;align-items:center;padding:0 2px;gap:3px}
 .h2{flex:0 0 84px;margin:0 0 0 2px;background:#4b4b4d;text-align:center;line-height:19px}
 .h3{flex:1;background:linear-gradient(#c4c4c4,#a8a8a8 20%,#858585)}
 .purple{--bg:#4b2384;--bar:#3d0f9d;--panel:#77688c;--io:#4b2384}
 audio-clip.blue{--c:#97bbd6;--t:#4c6272}audio-clip.green{--c:#a8cd8c;--t:#546a48;bottom:1px}`,
 `<div class="win"><pt-titlebar>Edition : Zinn Trio Cave Poésie Patrick Faubert 04 correction BOMBARDEMENTS BARBARES</pt-titlebar>
 <pt-toolbar></pt-toolbar>
 <div class="ed"><div class="up"><div class="m"><time-ruler></time-ruler>
 <div class="hd"><div class="h1">${svg(15,10,'<path d="M0 0h15v10H0z" fill="#eee"/><path d="M7.500 0v10M10.500 0v10M13.500 0v10" stroke="#333"/>')}${svg(7,4,'<path d="M0 0h7L4 4z" fill="#fff"/>')}<span style="flex:1"></span>${svg(11,11,'<circle cx="5.500" cy="5.500" r="5" fill="#4a63a8" stroke="#222"/><path d="M5.500 2v4l2 2" stroke="#fff" fill="none"/>')}${svg(9,5,'<path d="M1 0h8L5 5z" fill="#fff"/>')}</div><div class="h2">E/S</div><div class="h3"></div></div>
 <edit-row style="height:79px" ticks="19:9,56:9"><track-head slot="head" name="itunes" in="In 1-2" out="Main" vol="-16.3"></track-head>
  <audio-clip class="blue" style="left:-2px;right:-2px"></audio-clip><audio-clip class="blue" name="itun" style="left:142px;width:25px"></audio-clip><audio-clip class="blue" name="itunes" gain="-7.1" style="left:166px;width:37px"></audio-clip><audio-clip class="blue" name="itunes_15-17" gain="-8.5 dB" style="left:202px;right:-2px"></audio-clip><stereo-wave></stereo-wave></edit-row>
 <edit-row auto="60" style="height:97px" ticks="24:9,38:7,51:6,64:5,71:4,76:3"><auto-head slot="head"></auto-head></edit-row>
 <edit-row style="height:97px" ticks="47:9"><track-head slot="head" tall name="VoixVincent" in="In 3" out="Main" vol="+0.3"></track-head>
  <audio-clip class="green" name="Fuck_01-02" gain="0 dB" style="left:195px;width:71px"><mono-wave></mono-wave></audio-clip>
  <audio-clip it name="Voix Vincent-NO" gain="-10.6 dB" style="left:273px;width:85px;border-left-width:2px"></audio-clip>
  <audio-clip style="left:402px;width:4px"></audio-clip>
  <audio-clip it name="Voix V" gain="-10." style="left:499px;width:40px;border-left-width:2px"></audio-clip><audio-clip style="left:537px;width:3px"></audio-clip>
  <audio-clip it name="Voix Vincent-NORM-103" gain="-10.6 dB" style="left:627px;width:269px"></audio-clip>
  <audio-clip it name="Voix Vincent-NORM-65" gain="-10.6 dB" style="left:895px;right:-2px"></audio-clip></edit-row>
 <edit-row auto="121" style="flex:1" ticks="31:5,68:9,124:5,184:4,212:3,268:6,332:5,404:4"><auto-head slot="head"></auto-head></edit-row>
 <edit-row class="purple" style="height:61px" ticks="29:9"><track-head slot="head" mini name="Voix Luc" in="In 4" out="MASTER CH" vol="0.0" pan="39"></track-head>
  <audio-clip it name="Voix Luc-N" gain="-18.8 dB" style="left:537px;width:57px"></audio-clip><audio-clip style="left:591px;width:3px"></audio-clip></edit-row>
 <edit-row class="purple" style="height:20px"><track-head slot="head" mini cut name="Voix Théo" in="In 5"></track-head>
  <audio-clip it name="o-NORM-1" style="left:538px;width:57px;bottom:-40px"></audio-clip></edit-row>
 </div><scroll-col></scroll-col></div><scroll-row></scroll-row></div></div>
 <missing-dialog><span slot="title">Fichiers manquants</span>34 fichier(s) audio, 0 fichier(s) vidéo, et 0 fichier(s) audio avec traitement Elastic sont manquants. Souhaitez-vous:</missing-dialog>
 <plugin-window></plugin-window>`);
</script>
</body>
</html>
